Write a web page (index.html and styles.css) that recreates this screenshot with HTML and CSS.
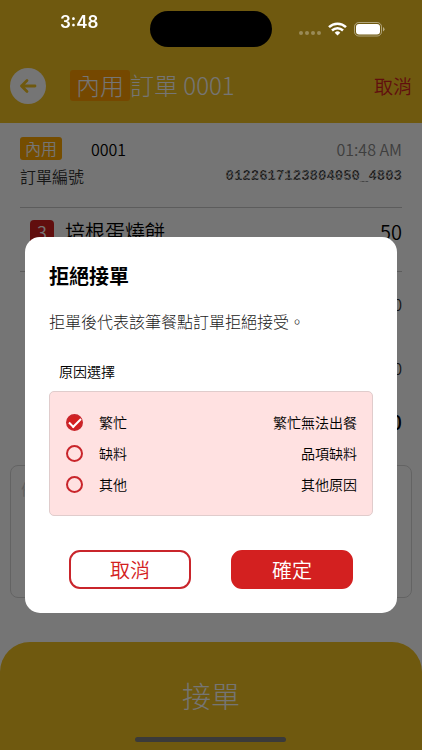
FILE: index.html
```html
<!DOCTYPE html>
<html lang="zh-Hant">
<head>
<meta charset="utf-8">
<meta name="viewport" content="width=device-width, initial-scale=1">
<title>訂單 0001</title>
<link rel="stylesheet" href="styles.css">
</head>
<body>
<div class="status">
  <span class="clock">3:48</span>
  <span class="island"></span>
  <span class="signals">
    <svg class="dots" width="22" height="4" viewBox="0 0 22 4"><circle cx="2" cy="2" r="2"/><circle cx="8" cy="2" r="2"/><circle cx="14" cy="2" r="2"/><circle cx="20" cy="2" r="2"/></svg>
    <svg width="19" height="14" viewBox="0 0 19 14" fill="none" stroke="#fff" stroke-width="2.5"><path d="M1 5.1a12.2 12.2 0 0 1 17 0"/><path d="M4 8.5a7.9 7.9 0 0 1 11 0"/><path d="M9.500 13.500 6.700 10.700a4 4 0 0 1 5.600 0z" fill="#fff" stroke="none"/></svg>
    <svg width="31" height="15" viewBox="0 0 31 15"><rect x=".5" y=".5" width="27" height="13.500" rx="4.300" fill="none" stroke="#fff" stroke-opacity=".45"/><rect x="2" y="2" width="24" height="10.500" rx="3" fill="#fff"/><path d="M29 5v4.500q1.500-.8 1.500-2.250T29 5z" fill="#fff" fill-opacity=".5"/></svg>
  </span>
</div>
<div class="page">
  <header class="topbar">
    <button class="back" type="button" aria-label="返回"><svg width="18" height="16" viewBox="0 0 18 16" fill="none" stroke="#f2c222" stroke-width="2.800" stroke-linecap="round" stroke-linejoin="round"><path d="M16 8H2.500M8 2.500 2.500 8 8 13.500"/></svg></button>
    <h1><span class="tag tag-large">內用</span><span>訂單 0001</span></h1>
    <button class="link" type="button">取消</button>
  </header>
  <main class="order">
    <section class="summary">
      <div class="line"><span class="tag">內用</span><span class="number">0001</span><time>01:48 AM</time></div>
      <div class="line"><span class="label">訂單編號</span><span class="serial">0122617123804050_4803</span></div>
    </section>
    <section class="items">
      <div class="item"><span class="qty">3</span><span>培根蛋燒餅</span><span class="price">50</span></div>
      <div class="fee">0</div>
      <div class="fee">0</div>
      <div class="total">0</div>
    </section>
    <textarea class="note" aria-label="備註" placeholder="備註"></textarea>
  </main>
  <button class="accept" type="button">接單</button>
</div>
<div class="overlay">
  <form class="dialog" role="dialog" aria-labelledby="dialog-title">
    <h2 id="dialog-title">拒絕接單</h2>
    <p>拒單後代表該筆餐點訂單拒絕接受。</p>
    <fieldset>
      <legend>原因選擇</legend>
      <div class="reasons">
        <label><input type="radio" name="reason" checked><span>繁忙</span><span class="detail">繁忙無法出餐</span></label>
        <label><input type="radio" name="reason"><span>缺料</span><span class="detail">品項缺料</span></label>
        <label><input type="radio" name="reason"><span>其他</span><span class="detail">其他原因</span></label>
      </div>
    </fieldset>
    <div class="actions">
      <button type="button">取消</button>
      <button type="button" class="primary">確定</button>
    </div>
  </form>
</div>
<div class="home"></div>
</body>
</html>
```
FILE: styles.css
```css
* { box-sizing: border-box; }
body {
  margin: 0;
  font-family: "Noto Sans CJK TC", "Noto Sans", sans-serif;
  font-weight: 350;
  color: #000;
}
button, textarea { font: inherit; }
button { padding: 0; border: 0; background: none; }
h1, h2, p { margin: 0; }

.status {
  position: fixed;
  inset: 0 0 auto;
  z-index: 3;
  display: grid;
  grid-template-columns: 1fr 122px 1fr;
  padding-top: 11px;
  color: #fff;
}
.clock {
  font: 600 17px/22px Inter, sans-serif;
  padding-left: 60px;
}
.island { height: 36px; border-radius: 18px; background: #000; }
.signals {
  display: flex;
  align-items: center;
  gap: 7px;
  height: 36px;
  padding-left: 27px;
}
.dots { fill: #fff; fill-opacity: .3; align-self: flex-end; margin-bottom: 12px; }

.page { min-height: 100vh; display: flex; flex-direction: column; }
.topbar {
  display: flex;
  align-items: center;
  height: 123px;
  padding: 48px 10px 0;
  background: #f2c222;
}
.back {
  display: grid;
  place-items: center;
  width: 36px;
  height: 36px;
  border-radius: 50%;
  background: #fff;
}
h1 {
  display: flex;
  align-items: center;
  flex: 1;
  padding-left: 24px;
  font-size: 24px;
  line-height: 28px;
  font-weight: 300;
  color: #fff;
}
h1 span:last-child { padding-bottom: 2px; }
.tag {
  padding: 0 5px;
  border-radius: 3px;
  background: #ffa800;
  color: #fff;
  font-size: 16px;
  line-height: 23px;
}
.tag-large { padding: 0 6px 2px; font-size: 24px; line-height: 29px; background: #ff9d00; }
.link { color: #d32020; font-size: 19px; }

.order { flex: 1; padding: 10px 10px 0; }
.summary {
  margin: 0 10px;
  padding: 2px 0 18px;
  border-bottom: 1px solid #c8c8c8;
}
.line {
  display: flex;
  align-items: center;
  height: 27px;
  font-size: 16px;
  color: #333;
}
.number { margin-left: 29px; color: #000; }
time, .serial { margin-left: auto; }
time { color: #888; }
.serial {
  position: relative;
  font: 700 14px/14px "Liberation Mono", monospace;
}
/* Mosaic that obscures the serial number */
.serial::after {
  content: "";
  position: absolute;
  inset: 0;
  background: repeating-conic-gradient(rgba(255, 255, 255, .5) 0 25%, rgba(255, 255, 255, .1) 0 50%) 0 0 / 4px 4px;
}
.items { margin: 0 10px; text-align: right; }
.item {
  display: flex;
  align-items: center;
  height: 64px;
  padding: 0 0 16px 10px;
  border-bottom: 1px solid #c8c8c8;
  font-size: 20px;
}
.qty {
  width: 24px;
  margin-right: 11px;
  border-radius: 4px;
  background: #d32020;
  color: #fff;
  font-size: 18px;
  line-height: 24px;
  text-align: center;
}
.price { margin-left: auto; }
.fee { height: 64px; font-size: 16px; line-height: 64px; color: #333; }
.total { height: 44px; font-size: 20px; line-height: 44px; font-weight: 500; }
.note {
  display: block;
  width: 100%;
  height: 133px;
  margin-top: 21px;
  padding: 12px 10px;
  border: 1px solid #d8d8d8;
  border-radius: 8px;
  background: none;
  resize: none;
  font-size: 15px;
}
.note::placeholder { color: #ccc; }
.accept {
  height: 108px;
  padding-bottom: 2px;
  border-radius: 30px 30px 0 0;
  background: #f2c222;
  color: #fff;
  font-size: 29px;
  font-weight: 300;
}

.overlay {
  position: fixed;
  inset: 0;
  z-index: 2;
  display: grid;
  place-items: center;
  padding: 100px 25px 0;
  background: rgba(0, 0, 0, .54);
}
.dialog {
  width: 100%;
  padding: 24px;
  border-radius: 15px;
  background: #fff;
}
h2 { font-size: 20px; line-height: 30px; font-weight: 700; }
p { margin-top: 18px; font-size: 16px; line-height: 24px; font-weight: 300; color: #222; }
fieldset { margin: 28px 0 0; padding: 0; border: 0; font-size: 14px; }
legend { padding: 0 10px; line-height: 20px; }
.reasons {
  margin-top: 10px;
  padding: 15px;
  border: 1px solid #e0cccc;
  border-radius: 5px;
  background: #ffe1e1;
}
.reasons label { display: flex; align-items: center; height: 31px; }
.reasons span { padding-bottom: 2px; }
.detail { margin-left: auto; }
input {
  appearance: none;
  width: 17px;
  height: 17px;
  margin: 0 16px 0 1px;
  border: 2px solid #c9252b;
  border-radius: 50%;
}
input:checked {
  display: grid;
  place-items: center;
  background: #d32020;
}
input:checked::before {
  content: "";
  width: 10px;
  height: 5px;
  margin-bottom: 3px;
  border: solid #fff;
  border-width: 0 0 2px 2px;
  transform: rotate(-45deg);
}
.actions { display: flex; gap: 40px; margin-top: 34px; padding: 0 20px; }
.actions button {
  flex: 1;
  height: 39px;
  border: 2px solid #c9252b;
  border-radius: 11px;
  color: #d32020;
  font-size: 20px;
  line-height: 30px;
}
.actions .primary { border-color: #d32020; background: #d32020; color: #fff; }

.home {
  position: fixed;
  bottom: 8px;
  left: 50%;
  z-index: 3;
  width: 151px;
  height: 5px;
  margin-left: -76px;
  border-radius: 3px;
  background: #3a3a3a;
}
```
